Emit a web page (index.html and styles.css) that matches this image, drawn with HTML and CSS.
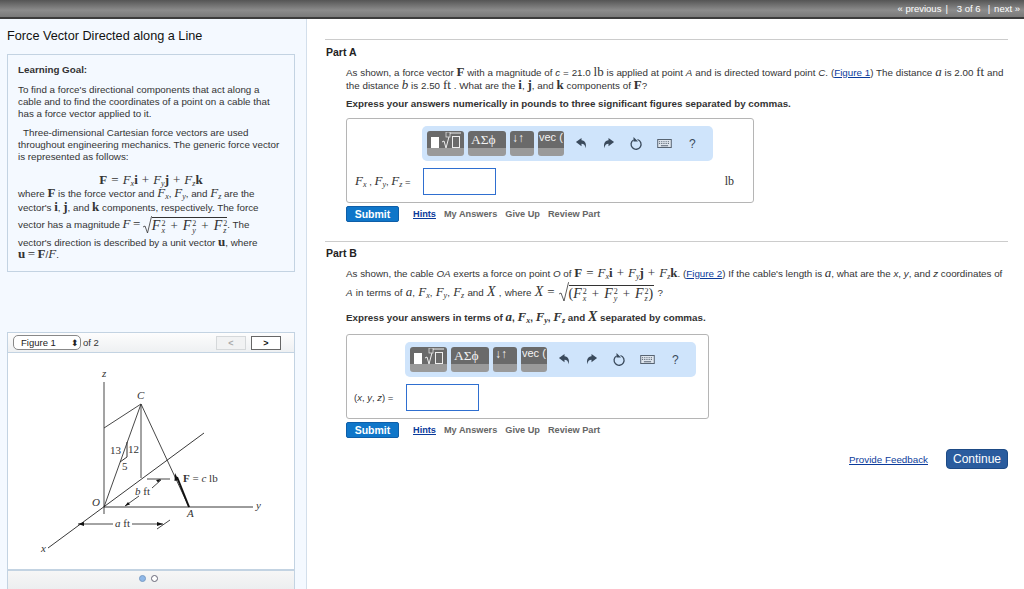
FILE: index.html
```html
<!DOCTYPE html>
<html lang="en">
<head>
    <meta charset="UTF-8">
    <title>Force Vector Directed along a Line</title>
    <link rel="stylesheet" href="styles.css">
</head>
<body>
    <nav class="topbar">
        <a href="#">« previous</a><span class="sep">|</span>
        <span class="count">3 of 6</span><span class="sep">|</span>
        <a href="#">next »</a>
    </nav>

    <div class="page">
        <aside class="sidebar">
            <h1>Force Vector Directed along a Line</h1>

            <section class="goal">
                <p class="goal-title">Learning Goal:</p>
                <p class="goal-intro">To find a force's directional components that act along a<br>cable and to find the coordinates of a point on a cable that<br>has a force vector applied to it.</p>
                <p class="goal-text"><span class="indent"></span>Three-dimensional Cartesian force vectors are used<br>throughout engineering mechanics. The generic force vector<br>is represented as follows:</p>
                <p class="eq"><b class="v">F</b><span class="op">=</span><i class="m">F<sub>x</sub></i><b class="v">i</b><span class="op">+</span><i class="m">F<sub>y</sub></i><b class="v">j</b><span class="op">+</span><i class="m">F<sub>z</sub></i><b class="v">k</b></p>
                <p class="line l1">where <b class="v">F</b> is the force vector and <i class="m">F<sub>x</sub></i>, <i class="m">F<sub>y</sub></i>, and <i class="m">F<sub>z</sub></i> are the</p>
                <p class="line l2">vector's <b class="v">i</b>, <b class="v">j</b>, and <b class="v">k</b> components, respectively. The force</p>
                <p class="line l3">vector has a magnitude <i class="m">F</i><span class="op">=</span><span class="sqrt"><svg class="root" width="9" height="18" viewBox="0 0 9 18"><path d="M0 11l2-1 2.500 7L8.500 .5H9" fill="none" stroke="#333" stroke-width=".8"/></svg><span class="rad"><i class="m">F</i><span class="ss"><span>2</span><i>x</i></span><span class="op">+</span><i class="m">F</i><span class="ss"><span>2</span><i>y</i></span><span class="op">+</span><i class="m">F</i><span class="ss"><span>2</span><i>z</i></span></span></span>. The</p>
                <p class="line l4">vector's direction is described by a unit vector <b class="v">u</b>, where</p>
                <p class="line l5"><b class="v">u</b><span class="op">=</span><b class="v">F</b>/<i class="m">F</i>.</p>
            </section>

            <section class="figure">
                <div class="figure-bar">
                    <div class="figure-select"><span>Figure 1</span><span class="updown">⬍</span></div>
                    <span class="figure-of">of 2</span>
                    <button class="figure-btn off">&lt;</button>
                    <button class="figure-btn">&gt;</button>
                </div>
                <div class="figure-img">
                    <svg width="286" height="216" viewBox="8 353 286 216">
                        <g fill="none" stroke="#333" stroke-width=".9">
                            <path d="M104 382V514" stroke="#666" stroke-width="1.200"/>
                            <path d="M104 428L141 404L104 507M141 404V478M141 404L189 507"/>
                            <path d="M48 548L204 433M104 507H253" stroke="#222"/>
                            <path d="M127 442V457L120 462" stroke-width="1"/>
                            <path d="M147 479H170M125 506L139 496M152 488L161 480"/>
                            <path d="M78 524H113M132 524H163M157 529L170 520"/>
                            <path d="M189 507L177 477" stroke="#111" stroke-width="2"/>
                        </g>
                        <path d="M175 473l3.500 7-4 1z" fill="#111"/>
                        <path d="M125 506l5-1.500-2-2.500zM161 479l-5 1 2 2.500zM78 524l6-2v4zM163 524l-6-2v4z" fill="#111"/>
                        <g class="fig-text">
                            <text x="102" y="377" font-style="italic">z</text>
                            <text x="137" y="399" font-style="italic">C</text>
                            <text x="110" y="454">13</text>
                            <text x="128" y="453">12</text>
                            <text x="122" y="470">5</text>
                            <text x="92" y="506" font-style="italic">O</text>
                            <text x="256" y="509" font-style="italic">y</text>
                            <text x="187" y="517" font-style="italic">A</text>
                            <text x="41" y="552" font-style="italic">x</text>
                            <text x="183" y="482"><tspan font-weight="bold">F</tspan> = <tspan font-style="italic">c</tspan> lb</text>
                            <text x="135" y="495"><tspan font-style="italic">b</tspan> ft</text>
                            <text x="115" y="527"><tspan font-style="italic">a</tspan> ft</text>
                        </g>
                    </svg>
                </div>
                <div class="figure-dots"><span class="dot on"></span><span class="dot"></span></div>
            </section>
        </aside>

        <main class="content">
            <section class="part part-a">
                <h2>Part A</h2>
                <p class="q q-a">As shown, a force vector <b class="v">F</b> with a magnitude of <i>c</i> = 21.0 <span class="m">lb</span> is applied at point <i>A</i> and is directed toward point <i>C</i>. (<a href="#">Figure 1</a>) The distance <i class="m">a</i> is 2.00 <span class="m">ft</span> and<br>the distance <i class="m">b</i> is 2.50 <span class="m">ft</span> . What are the <b class="v">i</b>, <b class="v">j</b>, and <b class="v">k</b> components of <b class="v">F</b>?</p>
                <p class="ask">Express your answers numerically in pounds to three significant figures separated by commas.</p>
                <div class="answer answer-a">
                    <div class="tools">
                        <span class="tbtn t1"><span class="sq-white"></span><svg width="21" height="17" viewBox="0 0 21 17"><path d="M1 10l2-1 2 7 4-15h11" fill="none" stroke="#eee"/><rect x="5" y="0" width="4" height="5" fill="#6a6a6a" stroke="#eee" stroke-width=".7"/><rect x="11.500" y="4.500" width="7" height="11" fill="none" stroke="#eee"/></svg></span>
                        <span class="tbtn t2">ΑΣϕ</span>
                        <span class="tbtn t3">↓↑</span>
                        <span class="tbtn t4">vec (</span>
                        <svg class="ic" width="13" height="13" viewBox="0 0 14 14"><path d="M7 1L1 5.500 7 10V7.200c2.500 0 4 1.300 4.500 4.800 1-4.500-.5-8.500-4.500-8.500z" fill="#3a4a5c"/></svg>
                        <svg class="ic" width="13" height="13" viewBox="0 0 14 14"><path d="M7 1l6 4.500L7 10V7.200C4.500 7.200 3 8.500 2.500 12c-1-4.500.5-8.500 4.500-8.500z" fill="#3a4a5c"/></svg>
                        <svg class="ic" width="14" height="14" viewBox="0 0 14 14"><path d="M8.500 2.500a5 5 0 1 1-4 .5" fill="none" stroke="#3a4a5c" stroke-width="1.300"/><path d="M4.500 0v4.500H9z" fill="#3a4a5c"/></svg>
                        <svg class="ic" width="15" height="9" viewBox="0 0 16 10"><rect x=".5" y=".5" width="15" height="9" fill="#dfe6ee" stroke="#4a5664"/><path d="M2 3h12M2 5h12" stroke="#4a5664" stroke-dasharray="1 1"/><path d="M4 7.500h8" stroke="#4a5664"/></svg>
                        <span class="help">?</span>
                    </div>
                    <div class="input-row">
                        <span class="input-label"><i class="m">F<sub>x</sub></i> , <i class="m">F<sub>y</sub></i>, <i class="m">F<sub>z</sub></i> =</span>
                        <span class="input"></span>
                        <span class="unit">lb</span>
                    </div>
                </div>
                <div class="actions">
                    <button class="submit">Submit</button>
                    <a class="hints" href="#">Hints</a>
                    <span>My Answers</span><span>Give Up</span><span>Review Part</span>
                </div>
            </section>

            <section class="part part-b">
                <h2>Part B</h2>
                <p class="q q-b1">As shown, the cable <i>OA</i> exerts a force on point <i>O</i> of <b class="v">F</b><span class="op">=</span><i class="m">F<sub>x</sub></i><b class="v">i</b><span class="op">+</span><i class="m">F<sub>y</sub></i><b class="v">j</b><span class="op">+</span><i class="m">F<sub>z</sub></i><b class="v">k</b>. (<a href="#">Figure 2</a>) If the cable's length is <i class="m">a</i>, what are the <i>x</i>, <i>y</i>, and <i>z</i> coordinates of</p>
                <p class="q q-b2"><i>A</i> in terms of <i class="m">a</i>, <i class="m">F<sub>x</sub></i>, <i class="m">F<sub>y</sub></i>, <i class="m">F<sub>z</sub></i> and <i class="m big">X</i> , where <i class="m big">X</i><span class="op">=</span><span class="sqrt"><svg class="root" width="10" height="20" viewBox="0 0 10 20"><path d="M0 12l2-1 3 8L9.500 .5H10" fill="none" stroke="#333" stroke-width=".8"/></svg><span class="rad rad-wide">(<i class="m">F</i><span class="ss"><span>2</span><i>x</i></span><span class="op">+</span><i class="m">F</i><span class="ss"><span>2</span><i>y</i></span><span class="op">+</span><i class="m">F</i><span class="ss"><span>2</span><i>z</i></span>)</span></span> ?</p>
                <p class="ask ask-b">Express your answers in terms of <i class="m">a</i>, <i class="m">F<sub>x</sub></i>, <i class="m">F<sub>y</sub></i>, <i class="m">F<sub>z</sub></i> and <i class="m big">X</i> separated by commas.</p>
                <div class="answer answer-b">
                    <div class="tools">
                        <span class="tbtn t1"><span class="sq-white"></span><svg width="21" height="17" viewBox="0 0 21 17"><path d="M1 10l2-1 2 7 4-15h11" fill="none" stroke="#eee"/><rect x="5" y="0" width="4" height="5" fill="#6a6a6a" stroke="#eee" stroke-width=".7"/><rect x="11.500" y="4.500" width="7" height="11" fill="none" stroke="#eee"/></svg></span>
                        <span class="tbtn t2">ΑΣϕ</span>
                        <span class="tbtn t3">↓↑</span>
                        <span class="tbtn t4">vec (</span>
                        <svg class="ic" width="13" height="13" viewBox="0 0 14 14"><path d="M7 1L1 5.500 7 10V7.200c2.500 0 4 1.300 4.500 4.800 1-4.500-.5-8.500-4.500-8.500z" fill="#3a4a5c"/></svg>
                        <svg class="ic" width="13" height="13" viewBox="0 0 14 14"><path d="M7 1l6 4.500L7 10V7.200C4.500 7.200 3 8.500 2.500 12c-1-4.500.5-8.500 4.500-8.500z" fill="#3a4a5c"/></svg>
                        <svg class="ic" width="14" height="14" viewBox="0 0 14 14"><path d="M8.500 2.500a5 5 0 1 1-4 .5" fill="none" stroke="#3a4a5c" stroke-width="1.300"/><path d="M4.500 0v4.500H9z" fill="#3a4a5c"/></svg>
                        <svg class="ic" width="15" height="9" viewBox="0 0 16 10"><rect x=".5" y=".5" width="15" height="9" fill="#dfe6ee" stroke="#4a5664"/><path d="M2 3h12M2 5h12" stroke="#4a5664" stroke-dasharray="1 1"/><path d="M4 7.500h8" stroke="#4a5664"/></svg>
                        <span class="help">?</span>
                    </div>
                    <div class="input-row">
                        <span class="input-label">(<i>x</i>, <i>y</i>, <i>z</i>) =</span>
                        <span class="input"></span>
                    </div>
                </div>
                <div class="actions">
                    <button class="submit">Submit</button>
                    <a class="hints" href="#">Hints</a>
                    <span>My Answers</span><span>Give Up</span><span>Review Part</span>
                </div>
            </section>

            <div class="feedback">
                <a href="#">Provide Feedback</a>
                <button class="continue">Continue</button>
            </div>
        </main>
    </div>
</body>
</html>
```

FILE: styles.css
```css
* {
    box-sizing: border-box;
}

html, body {
    height: 100%;
}

body {
    font-family: "Liberation Sans", Arial, sans-serif;
    font-size: 10px;
    margin: 0;
    padding: 0;
    background-color: #fff;
    color: #333;
    overflow: hidden;
}

p, h1, h2 {
    margin: 0;
}

/* top bar */
.topbar {
    height: 19px;
    background: linear-gradient(#555, #8c8c8c 60%, #7a7a7a);
    border-bottom: 2px solid #3c3c3c;
    color: #fff;
    display: flex;
    justify-content: flex-end;
    align-items: center;
    padding-right: 4px;
    font-size: 9.500px;
    line-height: 16px;
}

.topbar a {
    color: #fff;
    text-decoration: none;
}

.sep {
    margin: 0 4px;
}

.count {
    margin: 0 3px 0 5px;
}

.page {
    display: flex;
    height: 570px;
}

/* left column */
.sidebar {
    width: 307px;
    height: 570px;
    flex: none;
    background-color: #f4f9ff;
    border-right: 1px solid #d3dfeb;
    padding: 0 11px 0 7px;
    overflow: hidden;
}

.sidebar h1 {
    font-size: 12.700px;
    font-weight: normal;
    color: #111;
    line-height: 16px;
    margin-top: 9px;
}

.goal {
    height: 218px;
    margin-top: 10px;
    border: 1px solid #c3d3e2;
    padding: 9px 10px;
    line-height: 12px;
    font-size: 9.800px;
    white-space: nowrap;
}

.goal-title {
    font-weight: bold;
}

.goal-intro {
    margin-top: 8px;
}

.goal-text {
    margin-top: 7px;
}

.indent {
    display: inline-block;
    width: 5px;
}

.eq {
    text-align: center;
    margin-top: 11px;
    font-family: "Liberation Serif", serif;
    font-size: 13px;
    line-height: 12px;
}

.line {
    height: 12px;
}

.l1 { margin-top: 1px; }
.l2 { margin-top: 2px; }
.l3 { margin-top: 3px; }
.l4 { margin-top: 8px; }
.l5 { margin-top: 0; }

.m {
    font-family: "Liberation Serif", serif;
    font-size: 13px;
}

.big {
    font-size: 14px;
}

.v {
    font-family: "Liberation Serif", serif;
    font-weight: bold;
    font-size: 13px;
}

.op {
    font-family: "Liberation Serif", serif;
    font-size: 13px;
    margin: 0 2.500px;
}

.eq .op, .q .op {
    margin: 0 4px;
}

.rad .op, .q .rad .op {
    margin: 0 5px;
}

sub {
    font-size: 8px;
    line-height: 0;
    vertical-align: -2px;
}

/* stacked square and subscript */
.ss {
    display: inline-flex;
    flex-direction: column;
    font-family: "Liberation Serif", serif;
    font-size: 8px;
    line-height: 7px;
    vertical-align: 4px;
    margin-left: 1px;
}

.sqrt {
    display: inline-flex;
    align-items: flex-end;
    vertical-align: middle;
    height: 18px;
}

.rad {
    border-top: 1px solid #333;
    font-family: "Liberation Serif", serif;
    font-size: 14px;
    line-height: 15px;
    height: 16px;
    margin-bottom: 1px;
}

.rad .m {
    font-size: 14px;
}

.rad-wide {
    padding-right: 1px;
}

/* figure panel */
.figure {
    margin-top: 60px;
    height: 258px;
    border: 1px solid #c3d3e2;
    border-bottom: 0;
    display: flex;
    flex-direction: column;
    background-color: #fff;
}

.figure-bar {
    height: 20px;
    flex: none;
    display: flex;
    align-items: center;
    padding: 0 13px 0 5px;
    background: linear-gradient(#fdfdfd, #eef0f2);
    border-bottom: 1px solid #c3d3e2;
}

.figure-select {
    width: 68px;
    height: 15px;
    border: 1px solid #888;
    border-radius: 5px;
    background-color: #fff;
    display: flex;
    justify-content: space-between;
    align-items: center;
    padding: 0 1px 0 7px;
    font-size: 9.500px;
    color: #222;
}

.updown {
    font-size: 9px;
}

.figure-of {
    margin-left: 2px;
    margin-right: auto;
    font-size: 9.500px;
}

.figure-btn {
    width: 30px;
    height: 14px;
    margin-left: 5px;
    padding: 0;
    border: 1px solid #666;
    background-color: #fff;
    font: bold 9px "Liberation Sans", sans-serif;
    line-height: 10px;
    color: #111;
}

.figure-btn.off {
    border-color: #d5d8da;
    background-color: #f1f2f3;
    color: #aaa;
}

.figure-img {
    height: 216px;
    flex: none;
    background-color: #fff;
}

.figure-img svg {
    display: block;
}

.fig-text {
    font-family: "Liberation Serif", serif;
    font-size: 11px;
    fill: #333;
}

.figure-dots {
    flex: 1;
    border-top: 2px solid #c3d3e2;
    background: linear-gradient(#f6f6f6, #eceeef);
    display: flex;
    justify-content: center;
    padding: 4px 6px 0 0;
    gap: 5px;
}

.dot {
    width: 7px;
    height: 7px;
    border-radius: 50%;
    border: 1px solid #667;
    background-color: #fff;
}

.dot.on {
    background-color: #8fb8e8;
    border-color: #7a9cc4;
}

/* right column */
.content {
    flex: 1;
    padding: 20px 16px 0 18px;
}

.part {
    border-top: 1px solid #ccc;
}

.part h2 {
    font-size: 10.500px;
    line-height: 12px;
    font-weight: bold;
    color: #222;
    margin: 6px 0 0 1px;
}

.q {
    margin-left: 21px;
    font-size: 9.800px;
    line-height: 12px;
    white-space: nowrap;
}

.q a, .feedback a, .hints {
    color: #0b3b9b;
}

.q-a {
    margin-top: 8px;
    word-spacing: .1px;
}

.ask {
    margin-left: 21px;
    margin-top: 6px;
    font-weight: bold;
    font-size: 9.800px;
    line-height: 12px;
    white-space: nowrap;
}

.answer {
    margin: 8px 0 0 21px;
    border: 1px solid #b5b5b5;
    border-radius: 3px;
    background-color: #fff;
    height: 85px;
    padding-top: 7px;
}

.answer-a {
    width: 408px;
}

.answer-b {
    width: 363px;
    margin-top: 10px;
}

.answer-a .tools {
    margin-left: 75px;
}

.answer-b .tools {
    margin-left: 58px;
}

.tools {
    width: 291px;
    height: 35px;
    background-color: #cfe4fb;
    border-radius: 5px;
    display: flex;
    align-items: center;
    padding: 0 0 0 5px;
}

.tbtn {
    height: 25px;
    margin-right: 4px;
    border-radius: 3px;
    background: linear-gradient(#6a6a6a, #6a6a6a 68%, #9a9a9a 70%, #9a9a9a);
    color: #f3f3f3;
    display: flex;
    font-family: "Liberation Serif", serif;
    overflow: hidden;
    white-space: nowrap;
}

.t1 {
    width: 37px;
    padding: 1px 0 0 4px;
    gap: 2px;
}

.sq-white {
    width: 8px;
    height: 11px;
    margin-top: 5px;
    background-color: #fff;
}

.t2 {
    width: 38px;
    padding: 2px 0 0 3px;
    font-size: 13.500px;
    line-height: 14px;
}

.t3 {
    width: 24px;
    padding: 0 0 0 2px;
    font: bold 12px "Liberation Sans", sans-serif;
    line-height: 15px;
}

.t4 {
    width: 26px;
    margin-right: 6px;
    padding: 0 0 0 1px;
    font: 11px "Liberation Sans", sans-serif;
    line-height: 12px;
}

.ic {
    margin: 0 14px 0 5px;
    flex: none;
}

.ic + .ic {
    margin-left: 0;
}

.help {
    margin-left: 3px;
    font-size: 12px;
    color: #3a4a5c;
}

.input-row {
    display: flex;
    align-items: center;
    margin-top: 6px;
    height: 28px;
}

.answer-a .input-row {
    padding: 0 19px 0 8px;
}

.answer-b .input-row {
    padding: 0 0 0 7px;
}

.input-label {
    font-size: 9.500px;
    white-space: nowrap;
}

.answer-a .input-label {
    width: 68px;
}

.answer-b .input-label {
    width: 52px;
}

.input {
    width: 73px;
    height: 27px;
    border: 1px solid #2f6fd0;
    background-color: #fff;
}

.unit {
    margin-left: auto;
    font-family: "Liberation Serif", serif;
    font-size: 12px;
}

.actions {
    display: flex;
    align-items: center;
    margin: 3px 0 0 21px;
    height: 16px;
    font-size: 9.200px;
    font-weight: bold;
    color: #666;
    gap: 8px;
}

.submit {
    width: 53px;
    height: 16px;
    padding: 0;
    margin-right: 6px;
    border: 1px solid #0e5ea8;
    border-radius: 2px;
    background-color: #0f76c9;
    color: #fff;
    font: bold 10.500px "Liberation Sans", sans-serif;
}

.part-b {
    margin-top: 19px;
}

.part-b h2 {
    margin-top: 5px;
}

.q-b1 {
    margin-top: 7px;
    height: 14px;
    line-height: 14px;
}

.q-b2 {
    margin-top: 2px;
    height: 20px;
    line-height: 20px;
    word-spacing: .5px;
}

.ask-b {
    margin-top: 9px;
}

.feedback {
    margin-top: 11px;
    display: flex;
    justify-content: flex-end;
    align-items: center;
    gap: 18px;
    font-size: 9.800px;
}

.continue {
    width: 62px;
    height: 20px;
    padding: 0;
    border: 1px solid #1d4a85;
    border-radius: 4px;
    background-color: #2a5c9e;
    color: #fff;
    font: 12px "Liberation Sans", sans-serif;
}
```
